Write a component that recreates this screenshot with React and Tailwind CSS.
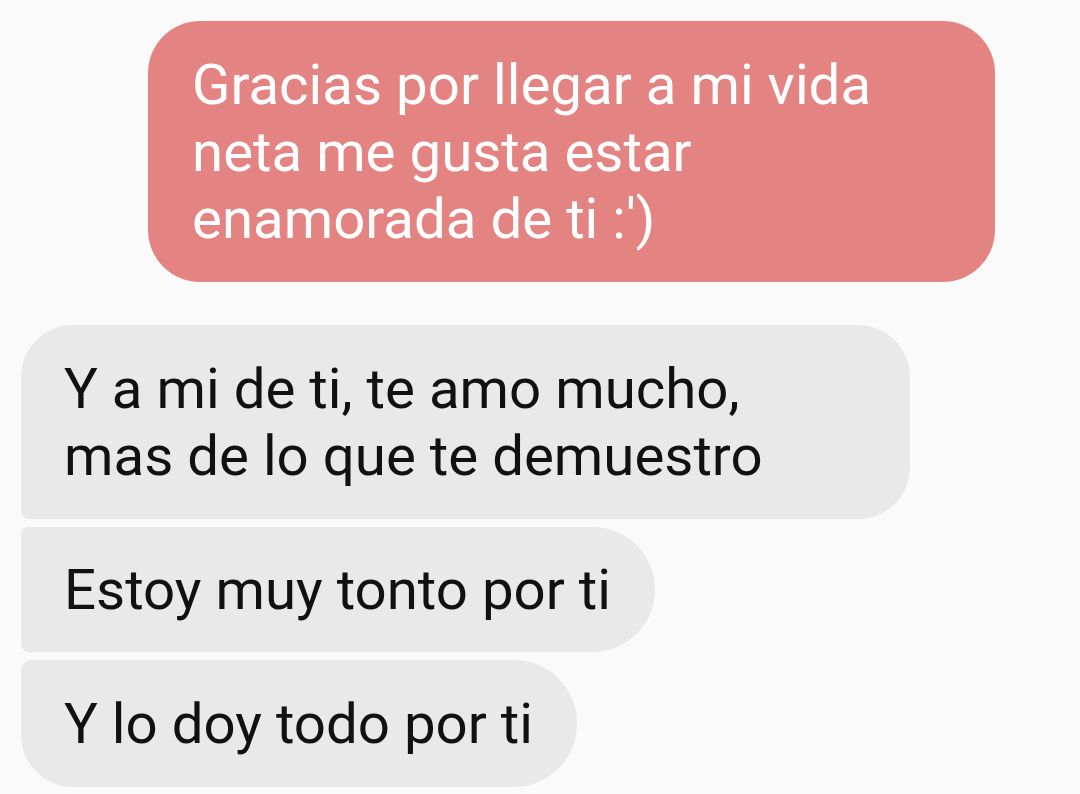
export default function App() {
  const font = { fontFamily: 'Roboto, "Noto Sans", sans-serif' }
  return (
    <div className="w-[1080px] h-[794px] bg-[#fafafa] overflow-hidden pt-[21px]" style={font}>
      <div className="flex justify-end pr-[85px]">
        <div className="w-[847px] bg-[#e38483] text-white rounded-[52px] pl-[44px] pt-[31px] pb-[29px] text-[56.4px] leading-[67px]">
          Gracias por llegar a mi vida<br />
          neta me gusta estar<br />
          enamorada de ti :')
        </div>
      </div>
      <div className="flex flex-col items-start pl-[21px] mt-[43px] gap-[8px] text-[#111] text-[56.4px] leading-[67px]">
        <div className="w-[889px] bg-[#e9e9e9] rounded-[52px] rounded-bl-[8px] pl-[43px] pt-[31px] pb-[29px]">
          Y a mi de ti, te amo mucho,<br />
          mas de lo que te demuestro
        </div>
        <div className="bg-[#e9e9e9] rounded-r-[63px] rounded-l-[8px] pl-[43px] pr-[44px] pt-[30px] pb-[28px]">
          Estoy muy tonto por ti
        </div>
        <div className="bg-[#e9e9e9] rounded-r-[63px] rounded-tl-[10px] rounded-bl-[52px] pl-[43px] pr-[44px] pt-[31px] pb-[29px]">
          Y lo doy todo por ti
        </div>
      </div>
    </div>
  )
}
